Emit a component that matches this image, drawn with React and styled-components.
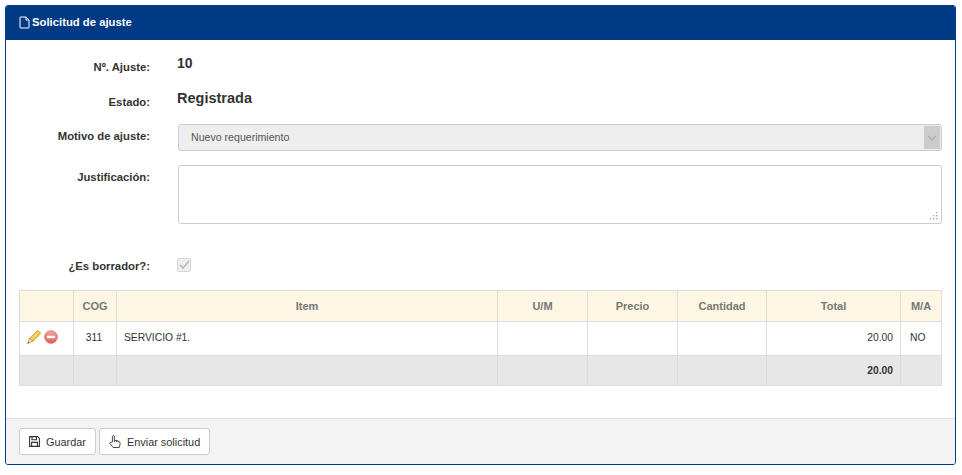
import styled, { createGlobalStyle } from "styled-components"

const GlobalStyle = createGlobalStyle`
    html, body {
        margin: 0;
        padding: 0;
        background: #fff;
        font-family: "Liberation Sans", Arial, sans-serif;
        font-size: 12px;
        color: #333;
    }
`;

const Panel = styled.section`
    box-sizing: border-box;
    width: 951px;
    height: 460px;
    margin: 5px 0 0 5px;
    display: flex;
    flex-direction: column;
    border: 1px solid #003a84;
    border-radius: 3px;
    overflow: hidden;
`;
const Heading = styled.header`
    flex: 0 0 34px;
    box-sizing: border-box;
    display: flex;
    align-items: center;
    gap: 2px;
    padding: 0 0 2px 13px;
    background: #003a84;
    color: #fff;
    font-size: 11.3px;
    font-weight: bold;
`;
const Body = styled.div`
    flex: 1;
    padding: 0 13px;
`;
const Row = styled.div`
    display: flex;
    height: ${(p) => p.$height}px;
`;
const Label = styled.label`
    box-sizing: border-box;
    width: 131px;
    flex: none;
    padding-top: ${(p) => p.$top || 0}px;
    text-align: right;
    font-size: 11.3px;
    font-weight: bold;
    line-height: 14px;
`;
const Control = styled.div`
    flex: 1;
    margin-left: 28px;
`;
const Value = styled.div`
    padding-top: ${(p) => p.$top || 0}px;
    margin-left: -1px;
    font-size: ${(p) => p.$size}px;
    font-weight: bold;
    line-height: 16px;
    color: #333;
`;
const SelectBox = styled.div`
    box-sizing: border-box;
    height: 27px;
    width: 764px;
    display: flex;
    align-items: center;
    justify-content: space-between;
    padding: 1px;
    border: 1px solid #ccc;
    border-radius: 3px;
    background: #eee;
    color: #555;
    font-size: 10.6px;
`;
const SelectText = styled.span`
    padding-left: 11px;
    margin-bottom: 2px;
`;
const SelectArrow = styled.span`
    width: 16px;
    height: 23px;
    display: flex;
    align-items: center;
    justify-content: center;
    background: #ccc;
`;
const TextArea = styled.div`
    position: relative;
    box-sizing: border-box;
    width: 764px;
    height: 59px;
    border: 1px solid #ccc;
    border-radius: 3px;
    background: #fff;
`;
const Grip = styled.svg`
    position: absolute;
    right: 3px;
    bottom: 3px;
`;
const CheckBox = styled.span`
    box-sizing: border-box;
    display: flex;
    align-items: center;
    justify-content: center;
    width: 14px;
    height: 14px;
    margin-left: -1px;
    border: 1px solid #d6d6d6;
    border-radius: 2px;
    background: #eee;
`;
const Table = styled.table`
    table-layout: fixed;
    width: 922px;
    border-collapse: collapse;
    font-size: 10.3px;
    color: #333;
    td, th {
        border: 1px solid #ddd;
        padding: 0 7px;
    }
`;
const HeadCell = styled.th`
    height: 30px;
    background: #fdf6e3;
    color: #777;
    font-size: 11px;
    font-weight: bold;
    text-align: center;
`;
const Cell = styled.td`
    height: 30px;
    && {
        padding-bottom: 3px;
        padding-left: ${(p) => p.$left || 7}px;
        padding-right: ${(p) => p.$right || 7}px;
    }
    text-align: ${(p) => p.$align || "left"};
`;
const FootCell = styled.td`
    height: 29px;
    background: #e7e7e7;
    font-weight: bold;
    text-align: right;
`;
const Actions = styled.div`
    display: flex;
    align-items: center;
    gap: 3px;
`;
const Footer = styled.footer`
    flex: 0 0 46px;
    box-sizing: border-box;
    display: flex;
    align-items: center;
    gap: 3px;
    padding: 0 13px;
    border-top: 1px solid #ddd;
    background: #f3f3f3;
`;
const Button = styled.button`
    box-sizing: border-box;
    height: 27px;
    display: flex;
    align-items: center;
    gap: 6px;
    padding: 0 9px;
    border: 1px solid #ccc;
    border-radius: 3px;
    background: #fff;
    color: #333;
    font-family: inherit;
    font-size: 10.9px;
`;

const FileIcon = () => (
    <svg width="11" height="13" viewBox="0 0 11 13" fill="none" stroke="#fff" strokeWidth="1">
        <path d="M1.5 1h5.5l3 3v7.5a.5.5 0 0 1-.5.5h-8a.5.5 0 0 1-.5-.5v-10a.5.5 0 0 1 .5-.5z" />
        <path d="M7 1v3h3" />
    </svg>
);

const PencilIcon = () => (
    <svg width="14" height="14" viewBox="0 0 14 14">
        <path d="M2.6 8.2 9.6 1.2a1.6 1.6 0 0 1 2.2 0l1 1a1.6 1.6 0 0 1 0 2.2L5.8 11.4z" fill="#f2c94f" stroke="#c8922c" strokeWidth=".8" />
        <path d="M4 9.6 10.8 2.8" stroke="#fbe9a0" strokeWidth="1" />
        <path d="M2.6 8.2.6 13.4l5.2-2z" fill="#f5dfb5" stroke="#a87a3a" strokeWidth=".6" />
        <path d="M1.2 11.8.6 13.4l1.6-.6z" fill="#4a3a20" />
    </svg>
);

const MinusIcon = () => (
    <svg width="14" height="14" viewBox="0 0 14 14">
        <defs>
            <linearGradient id="minusFill" x1="0" y1="0" x2="0" y2="1">
                <stop offset="0" stopColor="#f2a49c" />
                <stop offset="1" stopColor="#e25f56" />
            </linearGradient>
        </defs>
        <circle cx="7" cy="7" r="6.3" fill="url(#minusFill)" stroke="#d8675f" strokeWidth=".8" />
        <rect x="3" y="5.8" width="8" height="2.4" rx=".5" fill="#fff" />
    </svg>
);

const SaveIcon = () => (
    <svg width="11" height="11" viewBox="0 0 11 11" fill="none" stroke="#333" strokeWidth="1.1">
        <path d="M.6.6h8l1.8 1.8v8H.6z" />
        <path d="M3 .8v3h4.5v-3" />
        <path d="M2.6 10.2V6.4h5.8v3.8" />
    </svg>
);

const HandIcon = () => (
    <svg width="12" height="13" viewBox="0 0 12 13" fill="none" stroke="#333" strokeWidth=".9">
        <path d="M3.4 7V1.6a1 1 0 0 1 2 0v3.6l4 .9c1 .2 1.6 1 1.6 2v1.8l-.8 2.6H4.2L1 8.6c-.6-.8.5-1.8 1.3-1.1z" />
        <path d="M5.4 5.2v2M7.3 5.6v1.6M9.2 6v1.4" />
    </svg>
);

const App = () => {
    return (
        <>
            <GlobalStyle />
            <Panel>
                <Heading><FileIcon />Solicitud de ajuste</Heading>
                <Body>
                    <Row $height={35}>
                        <Label $top={20}>Nº. Ajuste:</Label>
                        <Control><Value $size={14} $top={15}>10</Value></Control>
                    </Row>
                    <Row $height={49}>
                        <Label $top={20}>Estado:</Label>
                        <Control><Value $size={14.5} $top={15}>Registrada</Value></Control>
                    </Row>
                    <Row $height={41}>
                        <Label $top={5}>Motivo de ajuste:</Label>
                        <Control>
                            <SelectBox>
                                <SelectText>Nuevo requerimiento</SelectText>
                                <SelectArrow>
                                    <svg width="10" height="6" viewBox="0 0 10 6" fill="none" stroke="#aaa" strokeWidth="1.2">
                                        <path d="M1 1l4 4 4-4" />
                                    </svg>
                                </SelectArrow>
                            </SelectBox>
                        </Control>
                    </Row>
                    <Row $height={93}>
                        <Label $top={5}>Justificación:</Label>
                        <Control>
                            <TextArea>
                                <Grip width="9" height="9" viewBox="0 0 9 9" fill="#aaa">
                                    <rect x="7" y="1" width="1.4" height="1.4" />
                                    <rect x="7" y="4" width="1.4" height="1.4" />
                                    <rect x="4" y="4" width="1.4" height="1.4" />
                                    <rect x="7" y="7" width="1.4" height="1.4" />
                                    <rect x="4" y="7" width="1.4" height="1.4" />
                                    <rect x="1" y="7" width="1.4" height="1.4" />
                                </Grip>
                            </TextArea>
                        </Control>
                    </Row>
                    <Row $height={32}>
                        <Label $top={1}>¿Es borrador?:</Label>
                        <Control>
                            <CheckBox>
                                <svg width="11" height="10" viewBox="0 0 11 10" fill="none" stroke="#bbb" strokeWidth="1.6">
                                    <path d="M1 5l3 3 6-7" />
                                </svg>
                            </CheckBox>
                        </Control>
                    </Row>
                    <Table>
                        <colgroup>
                            <col width="54" />
                            <col width="43" />
                            <col width="381" />
                            <col width="90" />
                            <col width="90" />
                            <col width="89" />
                            <col width="134" />
                            <col width="41" />
                        </colgroup>
                        <thead>
                            <tr>
                                <HeadCell></HeadCell>
                                <HeadCell>COG</HeadCell>
                                <HeadCell>Item</HeadCell>
                                <HeadCell>U/M</HeadCell>
                                <HeadCell>Precio</HeadCell>
                                <HeadCell>Cantidad</HeadCell>
                                <HeadCell>Total</HeadCell>
                                <HeadCell>M/A</HeadCell>
                            </tr>
                        </thead>
                        <tbody>
                            <tr>
                                <Cell><Actions><PencilIcon /><MinusIcon /></Actions></Cell>
                                <Cell $align="center" $right={9}>311</Cell>
                                <Cell>SERVICIO #1.</Cell>
                                <Cell></Cell>
                                <Cell></Cell>
                                <Cell></Cell>
                                <Cell $align="right">20.00</Cell>
                                <Cell $left={9} $right={2}>NO</Cell>
                            </tr>
                            <tr>
                                <FootCell></FootCell>
                                <FootCell></FootCell>
                                <FootCell></FootCell>
                                <FootCell></FootCell>
                                <FootCell></FootCell>
                                <FootCell></FootCell>
                                <FootCell>20.00</FootCell>
                                <FootCell></FootCell>
                            </tr>
                        </tbody>
                    </Table>
                </Body>
                <Footer>
                    <Button><SaveIcon />Guardar</Button>
                    <Button><HandIcon />Enviar solicitud</Button>
                </Footer>
            </Panel>
        </>
    )
}

export default App
